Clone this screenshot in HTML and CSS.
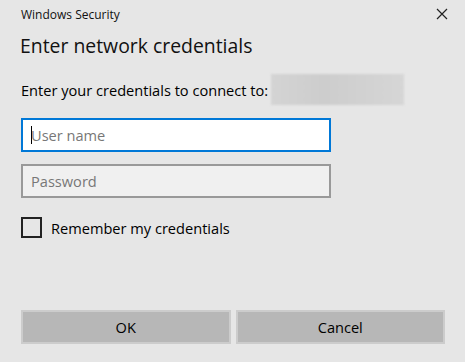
FILE: index.html
```html
<!DOCTYPE html>
<html lang="en">

<head>
    <meta charset="UTF-8" />
    <meta name="viewport" content="width=device-width, initial-scale=1.0" />
    <title>Windows Security</title>
    <link rel="stylesheet" href="styles.css">
</head>

<body>
    <div class="dialog">
        <div class="titlebar">
            <span class="app-name">Windows Security</span>
            <button class="close" aria-label="Close">
                <svg width="12" height="12" viewBox="0 0 12 12">
                    <path d="M1 1 L11 11 M11 1 L1 11" stroke="#222" stroke-width="1.2" fill="none" />
                </svg>
            </button>
        </div>
        <h1 class="heading">Enter network credentials</h1>
        <div class="target">
            <span>Enter your credentials to connect to:</span>
            <span class="blurred"></span>
        </div>
        <div class="fields">
            <div class="field focused"><span class="caret"></span><span class="placeholder">User name</span></div>
            <div class="field"><span class="placeholder">Password</span></div>
        </div>
        <label class="remember">
            <span class="checkbox"></span>
            <span>Remember my credentials</span>
        </label>
        <div class="actions">
            <button class="action">OK</button>
            <button class="action">Cancel</button>
        </div>
    </div>
</body>

</html>
```

FILE: styles.css
```css
body {
    margin: 0;
    background-color: #e6e6e6;
    font-family: "Open Sans", "Noto Sans", sans-serif;
    color: #000;
}

.dialog {
    width: 465px;
    height: 362px;
    box-sizing: border-box;
    padding: 0 20px 0 21px;
    display: flex;
    flex-direction: column;
}

.titlebar {
    display: flex;
    justify-content: space-between;
    align-items: center;
    height: 28px;
}

.app-name {
    font-size: 12px;
    color: #111;
}

.close {
    background: none;
    border: none;
    padding: 0;
    margin-right: -3px;
    display: flex;
}

.heading {
    font-size: 19.4px;
    font-weight: normal;
    margin: 4px 0 0 -1px;
    line-height: 28px;
    color: #111;
}

.target {
    display: flex;
    align-items: center;
    margin-top: 14px;
    font-size: 14.6px;
    height: 31px;
}

.blurred {
    width: 133px;
    height: 31px;
    margin-left: 3px;
    background: linear-gradient(90deg, #d4d4d4, #cdcdcd 40%, #d6d6d6);
    filter: blur(1px);
}

.fields {
    display: flex;
    flex-direction: column;
    gap: 12px;
    margin-top: 13px;
}

.field {
    width: 310px;
    height: 34px;
    box-sizing: border-box;
    border: 2px solid #999;
    background-color: #f0f0f0;
    display: flex;
    align-items: center;
    padding-left: 8px;
    font-size: 14.6px;
}

.focused {
    border-color: #0078d7;
    background-color: #fff;
}

.caret {
    width: 1px;
    height: 18px;
    background-color: #000;
    margin-right: -1px;
}

.placeholder {
    color: #777;
}

.remember {
    display: flex;
    align-items: center;
    gap: 9px;
    margin-top: 19px;
    font-size: 14.6px;
}

.checkbox {
    width: 21px;
    height: 21px;
    box-sizing: border-box;
    border: 2px solid #222;
}

.actions {
    display: flex;
    gap: 5px;
    margin-top: auto;
    margin-bottom: 18px;
}

.action {
    flex: 1;
    height: 34px;
    background-color: #b7b7b7;
    border: 2px solid #cccccc;
    font-family: inherit;
    font-size: 14.6px;
    color: #000;
}
```
